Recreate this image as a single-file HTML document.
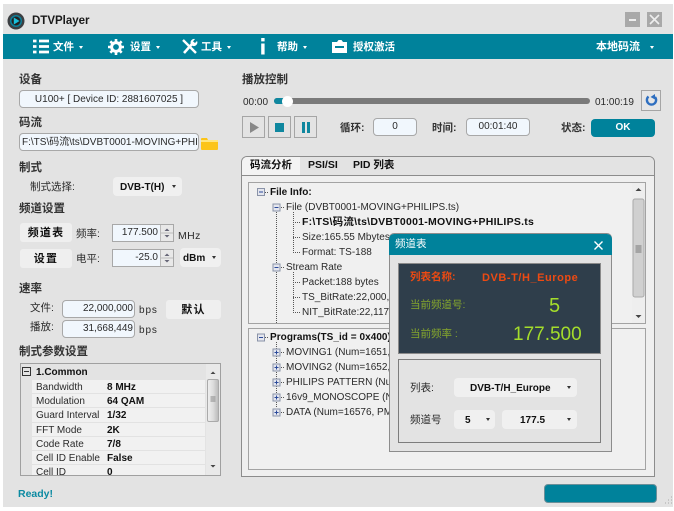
<!DOCTYPE html>
<html><head><meta charset="utf-8"><style>
html,body{margin:0;padding:0;width:674px;height:511px;overflow:hidden;background:#fff}
body{position:relative;font-family:"Liberation Sans","Noto Sans CJK SC",sans-serif;font-size:10px;color:#2a2a2a;filter:blur(.3px)}
div,span{box-sizing:border-box}
.a{position:absolute}
.t{position:absolute;white-space:nowrap;line-height:14px;height:14px}
.z{font-size:10.5px}
.h{font-size:11.5px;font-weight:bold;color:#333}
.b{font-weight:bold;color:#111}
.w{color:#fff;font-weight:bold;font-size:10.5px}
.box{position:absolute;background:#f1f7fd;border:1px solid #a8a8a8;border-radius:4px;white-space:nowrap;overflow:hidden;line-height:16px}
.btn{position:absolute;background:#efefef;border-radius:3px;text-align:center;font-weight:bold;color:#111;line-height:20px;letter-spacing:1.2px;font-size:11px}
.combo{position:absolute;background:#f0f0f0;border-radius:4px;font-weight:bold;color:#111;line-height:22px;white-space:nowrap}
.c{position:absolute;width:0;height:0;border-left:2.5px solid transparent;border-right:2.5px solid transparent;border-top:3px solid #333}
.cw{border-top-color:#fff}
.pb{position:absolute;width:23px;height:22px;border:1px solid #a5a5a5;background:#e3e3e3}
.spin{position:absolute;width:13px;background:#e8e8e8;border-left:1px solid #bbb}
.r{position:absolute;left:11px;right:15px;height:14.2px;border-bottom:1px solid #e2e2e2;background:#f1f1f1;line-height:15.5px;white-space:nowrap;overflow:hidden}
.r span{position:absolute;left:4px}
.r b{position:absolute;left:75px;color:#111}
.panel{position:absolute;background:#f0f0f0;border:1px solid #a3a3a3}
.dot{stroke:#555;stroke-width:1;stroke-dasharray:1 1;fill:none}
</style></head><body>
<div class="a" style="left:3px;top:4px;width:670px;height:503px;background:#e3e3e3"></div>

<svg class="a" style="left:7px;top:12px" width="18" height="18" viewBox="0 0 18 18"><circle cx="9" cy="9" r="8.5" fill="#3c3f42"/><circle cx="9" cy="9" r="6" fill="#0d7f99"/><circle cx="9" cy="9" r="4.5" fill="#222"/><path d="M6.8 5.500L12.600 9 6.800 12.500Z" fill="#19c0dc"/></svg>
<span class="t" style="left:32px;top:14px;font-size:11.5px;font-weight:bold;color:#1a1a1a">DTVPlayer</span>
<div class="a" style="left:625px;top:12px;width:15px;height:15px;background:#a9a9a9"><div class="a" style="left:4px;top:7px;width:7px;height:2px;background:#eee"></div></div>
<div class="a" style="left:647px;top:12px;width:15px;height:15px;background:#a9a9a9"><svg class="a" style="left:0;top:0" width="15" height="15"><path d="M3 3L12 12M12 3L3 12" stroke="#eee" stroke-width="1.6"/></svg></div>

<div class="a" style="left:3px;top:34px;width:670px;height:25px;background:#00829b"></div>
<svg class="a" style="left:33px;top:39px" width="16" height="15"><path d="M0 2h3.500M6 2h10M0 7.500h3.500M6 7.500h10M0 13h3.500M6 13h10" stroke="#fff" stroke-width="2.800"/></svg>
<span class="t w" style="left:53px;top:40px">文件</span><div class="c cw" style="left:79px;top:46px"></div>
<svg class="a" style="left:108px;top:39px" width="16" height="16" viewBox="0 0 16 16"><circle cx="8" cy="8" r="4.400" fill="none" stroke="#fff" stroke-width="3"/><path d="M8 0v3M8 13v3M0 8h3M13 8h3M2.300 2.300l2 2M11.700 11.700l2 2M13.700 2.300l-2 2M4.300 11.700l-2 2" stroke="#fff" stroke-width="2.600"/></svg>
<span class="t w" style="left:130px;top:40px">设置</span><div class="c cw" style="left:156px;top:46px"></div>
<svg class="a" style="left:182px;top:38px" width="16" height="16" viewBox="0 0 16 16"><path d="M2 15L10 6" stroke="#fff" stroke-width="2.600"/><path d="M9 6a3.500 3.500 0 0 1 4-5l-2 2.400 2 1.600 2-2a3.500 3.500 0 0 1-5 4.500z" fill="#fff"/><path d="M1 2L14 15" stroke="#fff" stroke-width="2.400"/></svg>
<span class="t w" style="left:201px;top:40px">工具</span><div class="c cw" style="left:227px;top:46px"></div>
<svg class="a" style="left:260px;top:38px" width="6" height="17"><rect x="1.200" y="0" width="3.400" height="3.400" fill="#fff"/><rect x="1.200" y="5.500" width="3.400" height="11" fill="#fff"/></svg>
<span class="t w" style="left:277px;top:40px">帮助</span><div class="c cw" style="left:303px;top:46px"></div>
<svg class="a" style="left:332px;top:39px" width="15" height="15"><path d="M0 3h5l1.500-2h3L11 3h4v11H0z" fill="#fff"/><rect x="3" y="7" width="9" height="2" fill="#00829b"/></svg>
<span class="t w" style="left:353px;top:40px">授权激活</span>
<span class="t w" style="left:596px;top:40px;font-size:11px">本地码流</span><div class="c cw" style="left:650px;top:46px"></div>

<span class="t h" style="left:19px;top:73px">设备</span>
<div class="box" style="left:19px;top:90px;width:180px;height:18px;text-align:center;line-height:18px">U100+ [ Device ID: 2881607025 ]</div>
<span class="t h" style="left:19px;top:116px">码流</span>
<div class="box" style="left:19px;top:133px;width:180px;height:18px;padding-left:2px;line-height:18px">F:\TS\码流\ts\DVBT0001-MOVING+PHILIPS</div>
<svg class="a" style="left:201px;top:137px" width="17" height="13"><path d="M0 2q0-1 1-1h5l1 2h9q1 0 1 1v8q0 1-1 1H1q-1 0-1-1z" fill="#fcc419"/><rect x="0" y="3" width="17" height="2" fill="#ffe680"/></svg>

<span class="t h" style="left:19px;top:161px">制式</span>
<span class="t z" style="left:30px;top:180px">制式选择:</span>
<div class="combo" style="left:113px;top:177px;width:69px;height:19px;padding-left:7px">DVB-T(H)</div><div class="c" style="left:172px;top:185px"></div>
<span class="t h" style="left:19px;top:202px">频道设置</span>
<div class="btn" style="left:20px;top:223px;width:52px;height:19px">频道表</div>
<span class="t z" style="left:76px;top:227px">频率:</span>
<div class="box" style="left:112px;top:224px;width:62px;height:18px;border-radius:0;text-align:right;padding-right:15px">177.500</div>
<div class="spin" style="left:160px;top:225px;height:16px"><svg width="12" height="16"><path d="M3.500 6L6 3.500 8.500 6z" fill="#667"/><path d="M3.500 10L6 12.500 8.500 10z" fill="#667"/><path d="M0 8h12" stroke="#bbb"/></svg></div>
<span class="t" style="left:178px;top:229px;font-size:10.5px;letter-spacing:.4px">MHz</span>
<div class="btn" style="left:20px;top:249px;width:52px;height:19px">设置</div>
<span class="t z" style="left:76px;top:252px">电平:</span>
<div class="box" style="left:112px;top:249px;width:62px;height:18px;border-radius:0;text-align:right;padding-right:15px">-25.0</div>
<div class="spin" style="left:160px;top:250px;height:16px"><svg width="12" height="16"><path d="M3.500 6L6 3.500 8.500 6z" fill="#667"/><path d="M3.500 10L6 12.500 8.500 10z" fill="#667"/><path d="M0 8h12" stroke="#bbb"/></svg></div>
<div class="combo" style="left:180px;top:248px;width:41px;height:19px;padding-left:3px">dBm</div><div class="c" style="left:212px;top:256px"></div>

<span class="t h" style="left:19px;top:282px">速率</span>
<span class="t z" style="left:30px;top:301px">文件:</span>
<div class="box" style="left:62px;top:300px;width:73px;height:18px;text-align:right;padding-right:1px">22,000,000</div>
<span class="t" style="left:139px;top:304px;letter-spacing:.9px">bps</span>
<div class="btn" style="left:166px;top:300px;width:55px;height:19px">默认</div>
<span class="t z" style="left:30px;top:320px">播放:</span>
<div class="box" style="left:62px;top:320px;width:73px;height:18px;text-align:right;padding-right:1px">31,668,449</div>
<span class="t" style="left:139px;top:324px;letter-spacing:.9px">bps</span>

<span class="t h" style="left:19px;top:345px">制式参数设置</span>
<div class="a" style="left:20px;top:363px;width:201px;height:113px;border:1px solid #a0a0a0;background:#e3e3e3;overflow:hidden">
 <div class="a" style="left:1px;top:3px;width:9px;height:9px;border:1px solid #333"><div class="a" style="left:1px;top:3px;width:5px;height:1px;background:#333"></div></div>
 <span class="t b" style="left:15px;top:2px">1.Common</span>
 <div class="r" style="top:16px"><span>Bandwidth</span><b>8 MHz</b></div>
 <div class="r" style="top:30.200px"><span>Modulation</span><b>64 QAM</b></div>
 <div class="r" style="top:44.400px"><span>Guard Interval</span><b>1/32</b></div>
 <div class="r" style="top:58.600px"><span>FFT Mode</span><b>2K</b></div>
 <div class="r" style="top:72.800px"><span>Code Rate</span><b>7/8</b></div>
 <div class="r" style="top:87px"><span>Cell ID Enable</span><b>False</b></div>
 <div class="r" style="top:101.200px"><span>Cell ID</span><b>0</b></div>
 <div class="a" style="left:185px;top:0;width:14px;height:112px;background:#e9e9e9"></div>
 <div class="a" style="left:186px;top:15px;width:12px;height:43px;background:linear-gradient(90deg,#eee,#ddd,#bcbcbc);border:1px solid #aaa;border-radius:2px"></div>
 <svg class="a" style="left:186px;top:0" width="12" height="112"><path d="M3.500 10L6 7.500 8.500 10zM3.500 101L6 103.500 8.500 101z" fill="#444"/><path d="M3.500 33h5M3.500 35h5M3.500 37h5" stroke="#888"/></svg>
</div>
<span class="t" style="left:18px;top:487px;font-weight:bold;color:#0b8aa2;font-size:10.5px">Ready!</span>
<div class="a" style="left:544px;top:484px;width:113px;height:19px;background:#00829b;border:1px solid #6b8f99;border-radius:4px"></div>
<svg class="a" style="left:662px;top:496px" width="11" height="11"><path d="M9 1h1M6 4h1M9 4h1M3 7h1M6 7h1M9 7h1" stroke="#aaa"/></svg>

<span class="t h" style="left:242px;top:73px">播放控制</span>
<span class="t" style="left:243px;top:96px">00:00</span>
<div class="a" style="left:274px;top:98px;width:316px;height:6px;background:#7a7a7a;border-radius:3px"></div>
<div class="a" style="left:274px;top:98px;width:12px;height:6px;background:#0f879f;border-radius:3px 0 0 3px"></div>
<div class="a" style="left:282px;top:96px;width:11px;height:11px;background:#fff;border-radius:50%"></div>
<span class="t" style="left:595px;top:96px">01:00:19</span>
<div class="a" style="left:641px;top:90px;width:20px;height:21px;border:1px solid #a5a5a5;background:#e6e6e6"></div>
<svg class="a" style="left:645px;top:94px" width="13" height="13" viewBox="0 0 13 13"><path d="M3.500 2.500A4.600 4.600 0 1 0 10 3" fill="none" stroke="#2f6fc0" stroke-width="2.400"/><path d="M7 0v5.500L2.500 3z" fill="#2f6fc0" transform="translate(3 0)"/></svg>
<div class="pb" style="left:242px;top:116px"><svg class="a" style="left:5px;top:4px" width="12" height="13"><path d="M2 1L11 6.500 2 12z" fill="#888"/></svg></div>
<div class="pb" style="left:268px;top:116px"><div class="a" style="left:6px;top:6px;width:9px;height:9px;background:#0f879f"></div></div>
<div class="pb" style="left:294px;top:116px"><div class="a" style="left:7px;top:5px;width:2.500px;height:11px;background:#0f879f"></div><div class="a" style="left:12px;top:5px;width:2.500px;height:11px;background:#0f879f"></div></div>
<span class="t z" style="left:340px;top:121px;font-weight:bold;color:#333">循环:</span>
<div class="box" style="left:373px;top:118px;width:44px;height:18px;text-align:center">0</div>
<span class="t z" style="left:432px;top:121px;font-weight:bold;color:#333">时间:</span>
<div class="box" style="left:466px;top:118px;width:64px;height:18px;text-align:center">00:01:40</div>
<span class="t z" style="left:561px;top:121px;font-weight:bold;color:#333">状态:</span>
<div class="a" style="left:591px;top:119px;width:64px;height:18px;background:#00829b;border-radius:4px;color:#fff;font-weight:bold;text-align:center;line-height:17px">OK</div>

<div class="a" style="left:241px;top:156px;width:414px;height:321px;border:1px solid #8c8c8c;border-radius:6px 6px 0 0;background:#efefef"></div>
<div class="a" style="left:241px;top:175px;width:414px;height:1px;background:#8c8c8c"></div>
<div class="a" style="left:242px;top:157px;width:58px;height:18px;background:#f3f3f3;border-radius:5px 0 0 0"></div>
<div class="a" style="left:300px;top:157px;width:354px;height:18px;background:#e3e3e3;border-radius:0 5px 0 0"></div>
<span class="t b z" style="left:250px;top:158px">码流分析</span>
<span class="t b z" style="left:308px;top:158px">PSI/SI</span>
<span class="t b z" style="left:353px;top:158px">PID 列表</span>

<div class="panel" style="left:248px;top:182px;width:398px;height:142px"></div>
<div class="panel" style="left:248px;top:328px;width:398px;height:142px"></div>
<svg class="a" style="left:632px;top:183px" width="13" height="140"><rect width="13" height="140" fill="#eee"/><rect x="1" y="16" width="11" height="98" rx="2" fill="#d0d0d0" stroke="#aaa"/><path d="M3.500 8L6.500 5 9.500 8zM3.500 132L6.500 135 9.500 132z" fill="#444"/><path d="M3.500 63h6M3.500 65h6M3.500 67h6M3.500 69h6" stroke="#777"/></svg>

<svg class="a" style="left:0;top:0" width="674" height="511">
<path class="dot" d="M276.500 212V323M265 192.500h4M281 207.500h4M281 267.500h4M293.500 212V252M293 222.500h8M293 237.500h8M293 252.500h8M293.500 272V312M293 282.500h8M293 297.500h8M293 312.500h8M265 337.500h4M276.500 342V408M281 352.500h4M281 367.500h4M281 382.500h4M281 397.500h4M281 412.500h4"/>
<g fill="#e4e6ee" stroke="#8a93a8">
<rect x="257.500" y="188.500" width="7" height="7"/><rect x="273" y="204" width="7" height="7"/><rect x="273" y="264" width="7" height="7"/>
<rect x="257.500" y="334" width="7" height="7"/><rect x="273" y="349" width="7" height="7"/><rect x="273" y="364" width="7" height="7"/><rect x="273" y="379" width="7" height="7"/><rect x="273" y="394" width="7" height="7"/><rect x="273" y="409" width="7" height="7"/>
</g>
<path d="M259 192h4M274.500 207.500h4M274.500 267.500h4M259 337.500h4M274.500 352.500h4M274.500 367.500h4M274.500 382.500h4M274.500 397.500h4M274.500 412.500h4M276.500 350.500v4M276.500 365.500v4M276.500 380.500v4M276.500 395.500v4M276.500 410.500v4" stroke="#2b4a9a"/>
</svg>
<span class="t b" style="left:270px;top:186px">File Info:</span>
<span class="t" style="left:286px;top:201px">File (DVBT0001-MOVING+PHILIPS.ts)</span>
<span class="t b z" style="left:302px;top:215px;letter-spacing:.25px">F:\TS\码流\ts\DVBT0001-MOVING+PHILIPS.ts</span>
<span class="t" style="left:302px;top:231px">Size:165.55 Mbytes</span>
<span class="t" style="left:302px;top:246px">Format: TS-188</span>
<span class="t" style="left:286px;top:261px">Stream Rate</span>
<span class="t" style="left:302px;top:276px">Packet:188 bytes</span>
<span class="t" style="left:302px;top:291px">TS_BitRate:22,000,000</span>
<span class="t" style="left:302px;top:306px">NIT_BitRate:22,117</span>
<span class="t b" style="left:270px;top:331px;letter-spacing:.05px">Programs(TS_id = 0x400)</span>
<span class="t" style="left:286px;top:346px">MOVING1 (Num=1651, PMT)</span>
<span class="t" style="left:286px;top:361px">MOVING2 (Num=1652, PMT)</span>
<span class="t" style="left:286px;top:376px">PHILIPS PATTERN (Num=1653)</span>
<span class="t" style="left:286px;top:391px">16v9_MONOSCOPE (Num=1654)</span>
<span class="t" style="left:286px;top:406px">DATA (Num=16576, PMT)</span>

<div class="a" style="left:389px;top:233px;width:223px;height:219px;background:#e3e3e3;border:1px solid #8c8c8c;border-radius:5px 5px 0 0"></div>
<div class="a" style="left:389px;top:234px;width:223px;height:21px;background:#00829b;border-radius:5px 5px 0 0"></div>
<span class="t z" style="left:395px;top:237px;color:#fff">频道表</span>
<svg class="a" style="left:593px;top:240px" width="11" height="11"><path d="M1.500 1.500L9.500 9.500M9.500 1.500L1.500 9.500" stroke="#fff" stroke-width="1.400"/></svg>
<div class="a" style="left:398px;top:263px;width:203px;height:91px;background:#2f3e4b;border:1px solid #8a8a8a"></div>
<span class="t z" style="left:410px;top:270px;font-weight:bold;color:#ee4a12">列表名称:</span>
<span class="t" style="left:482px;top:271px;font-weight:bold;color:#ee4a12;font-size:11px;letter-spacing:.55px">DVB-T/H_Europe</span>
<span class="t z" style="left:410px;top:298px;color:#86a82c">当前频道号:</span>
<span class="t" style="left:549px;top:299px;color:#a4dd2b;font-size:20px">5</span>
<span class="t z" style="left:410px;top:327px;color:#86a82c">当前频率 :</span>
<span class="t" style="left:513px;top:328px;color:#a4dd2b;font-size:19px">177.500</span>
<div class="a" style="left:398px;top:359px;width:203px;height:84px;background:#e3e3e3;border:1px solid #7d7d7d"></div>
<span class="t z" style="left:410px;top:381px">列表:</span>
<div class="combo" style="left:454px;top:378px;width:123px;height:19px;padding-left:16px">DVB-T/H_Europe</div><div class="c" style="left:567px;top:386px"></div>
<span class="t z" style="left:410px;top:413px">频道号</span>
<div class="combo" style="left:454px;top:410px;width:41px;height:19px;padding-left:11px">5</div><div class="c" style="left:486px;top:418px"></div>
<div class="combo" style="left:502px;top:410px;width:75px;height:19px;padding-left:18px">177.5</div><div class="c" style="left:567px;top:418px"></div>
</body></html>
